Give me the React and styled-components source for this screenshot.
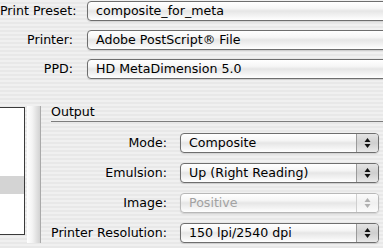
import styled, { createGlobalStyle } from "styled-components";

const GlobalStyle = createGlobalStyle`
  html, body {
    margin: 0;
    padding: 0;
    overflow: hidden;
  }
  body {
    width: 383px;
    height: 248px;
    font-family: "DejaVu Sans", "Liberation Sans", sans-serif;
    font-size: 12.6px;
    color: #000;
    background: repeating-linear-gradient(
      to bottom,
      #f0f0f0 0px,
      #f0f0f0 2px,
      #e8e8e8 2px,
      #e8e8e8 4px
    );
  }
`

const Page = styled.div`
  width: 383px;
  height: 248px;
  display: flex;
  flex-direction: column;
`

const TopGrid = styled.div`
  display: grid;
  grid-template-columns: 73px 1fr;
  grid-auto-rows: 20px;
  column-gap: 14px;
  row-gap: 9px;
  padding-top: 1px;
  align-items: center;
`

const Label = styled.div`
  text-align: right;
  white-space: nowrap;
  line-height: 20px;
`

const Popup = styled.div`
  height: 18px;
  border: 1px solid ${p => (p.$disabled ? "#b8b8b8" : "#6e6e6e")};
  border-radius: 4px;
  background: linear-gradient(
    to bottom,
    #ffffff 0%,
    #f6f6f6 35%,
    #e6e6e6 50%,
    #f2f2f2 75%,
    #ffffff 100%
  );
  display: flex;
  align-items: center;
  color: ${p => (p.$disabled ? "#a2a2a2" : "#000")};
  margin-right: ${p => (p.$wide ? "-30px" : "0")};
  overflow: hidden;
  box-shadow: 0 1px 1px rgba(0, 0, 0, 0.12);
`

const PopupText = styled.span`
  flex: 1;
  padding-left: 8px;
  white-space: nowrap;
  line-height: 18px;
`

const Stepper = styled.div`
  width: 21px;
  height: 100%;
  border-left: 1px solid ${p => (p.$disabled ? "#cfcfcf" : "#9a9a9a")};
  background: ${p =>
    p.$disabled
      ? "linear-gradient(to bottom, #fbfbfb, #f0f0f0 50%, #fbfbfb)"
      : "linear-gradient(to bottom, #e4e4e4, #cfcfcf 50%, #e8e8e8)"};
  display: flex;
  align-items: center;
  justify-content: center;
`

const Body = styled.div`
  display: flex;
  margin-top: 17px;
`

const LeftPane = styled.div`
  display: flex;
  width: 41px;
  gap: 2px;
  padding-top: 11px;
  flex-shrink: 0;
`

const ListBox = styled.div`
  width: 24px;
  height: 126px;
  background: #fff;
  border: 1px solid #3a3a3a;
  border-left: none;
  display: flex;
  flex-direction: column;
`

const ListRow = styled.div`
  height: 18px;
  background: ${p => (p.$selected ? "#d4d4d4" : "transparent")};
  margin-top: ${p => (p.$first ? "50px" : "0")};
`

const Strip = styled.div`
  width: 13px;
  height: 137px;
  margin-top: -1px;
  background: linear-gradient(to right, #ffffff, #f4f4f4 40%, #d2d2d2);
  border-right: 1px solid #a9a9a9;
`

const OutputPane = styled.div`
  flex: 1;
  margin-left: 10px;
`

const SectionTitle = styled.div`
  line-height: 16px;
  padding-top: 8px;
  padding-bottom: 1px;
  border-bottom: 1px solid #7d7d7d;
`

const OutGrid = styled.div`
  display: grid;
  grid-template-columns: 116px 199px;
  grid-auto-rows: 20px;
  column-gap: 13px;
  row-gap: 10px;
  padding-top: 11px;
  align-items: center;
`

function Arrows({ disabled }) {
  const c = disabled ? "#b0b0b0" : "#111";
  return (
    <svg width="7" height="12" viewBox="0 0 7 12">
      <path d="M3.5 1 L6.5 5 L0.5 5 Z" fill={c} />
      <path d="M3.5 11 L6.5 7 L0.5 7 Z" fill={c} />
    </svg>
  );
}

function Select({ value, disabled, wide, stepper = true }) {
  return (
    <Popup $disabled={disabled} $wide={wide}>
      <PopupText>{value}</PopupText>
      {stepper && (
        <Stepper $disabled={disabled}>
          <Arrows disabled={disabled} />
        </Stepper>
      )}
    </Popup>
  );
}

const outputRows = [
  { label: "Mode:", value: "Composite" },
  { label: "Emulsion:", value: "Up (Right Reading)" },
  { label: "Image:", value: "Positive", disabled: true },
  { label: "Printer Resolution:", value: "150 lpi/2540 dpi" },
];

export default function App() {
  return (
    <Page>
      <GlobalStyle />
      <TopGrid>
        <Label>Print Preset:</Label>
        <Select value="composite_for_meta" wide stepper={false} />
        <Label>Printer:</Label>
        <Select value="Adobe PostScript® File" wide stepper={false} />
        <Label>PPD:</Label>
        <Select value="HD MetaDimension 5.0" wide stepper={false} />
      </TopGrid>
      <Body>
        <LeftPane>
          <ListBox>
            <ListRow $first />
            <ListRow $selected />
          </ListBox>
          <Strip />
        </LeftPane>
        <OutputPane>
          <SectionTitle>Output</SectionTitle>
          <OutGrid>
            {outputRows.flatMap(r => [
              <Label key={r.label + "l"}>{r.label}</Label>,
              <Select key={r.label + "s"} value={r.value} disabled={r.disabled} />,
            ])}
          </OutGrid>
        </OutputPane>
      </Body>
    </Page>
  );
}
